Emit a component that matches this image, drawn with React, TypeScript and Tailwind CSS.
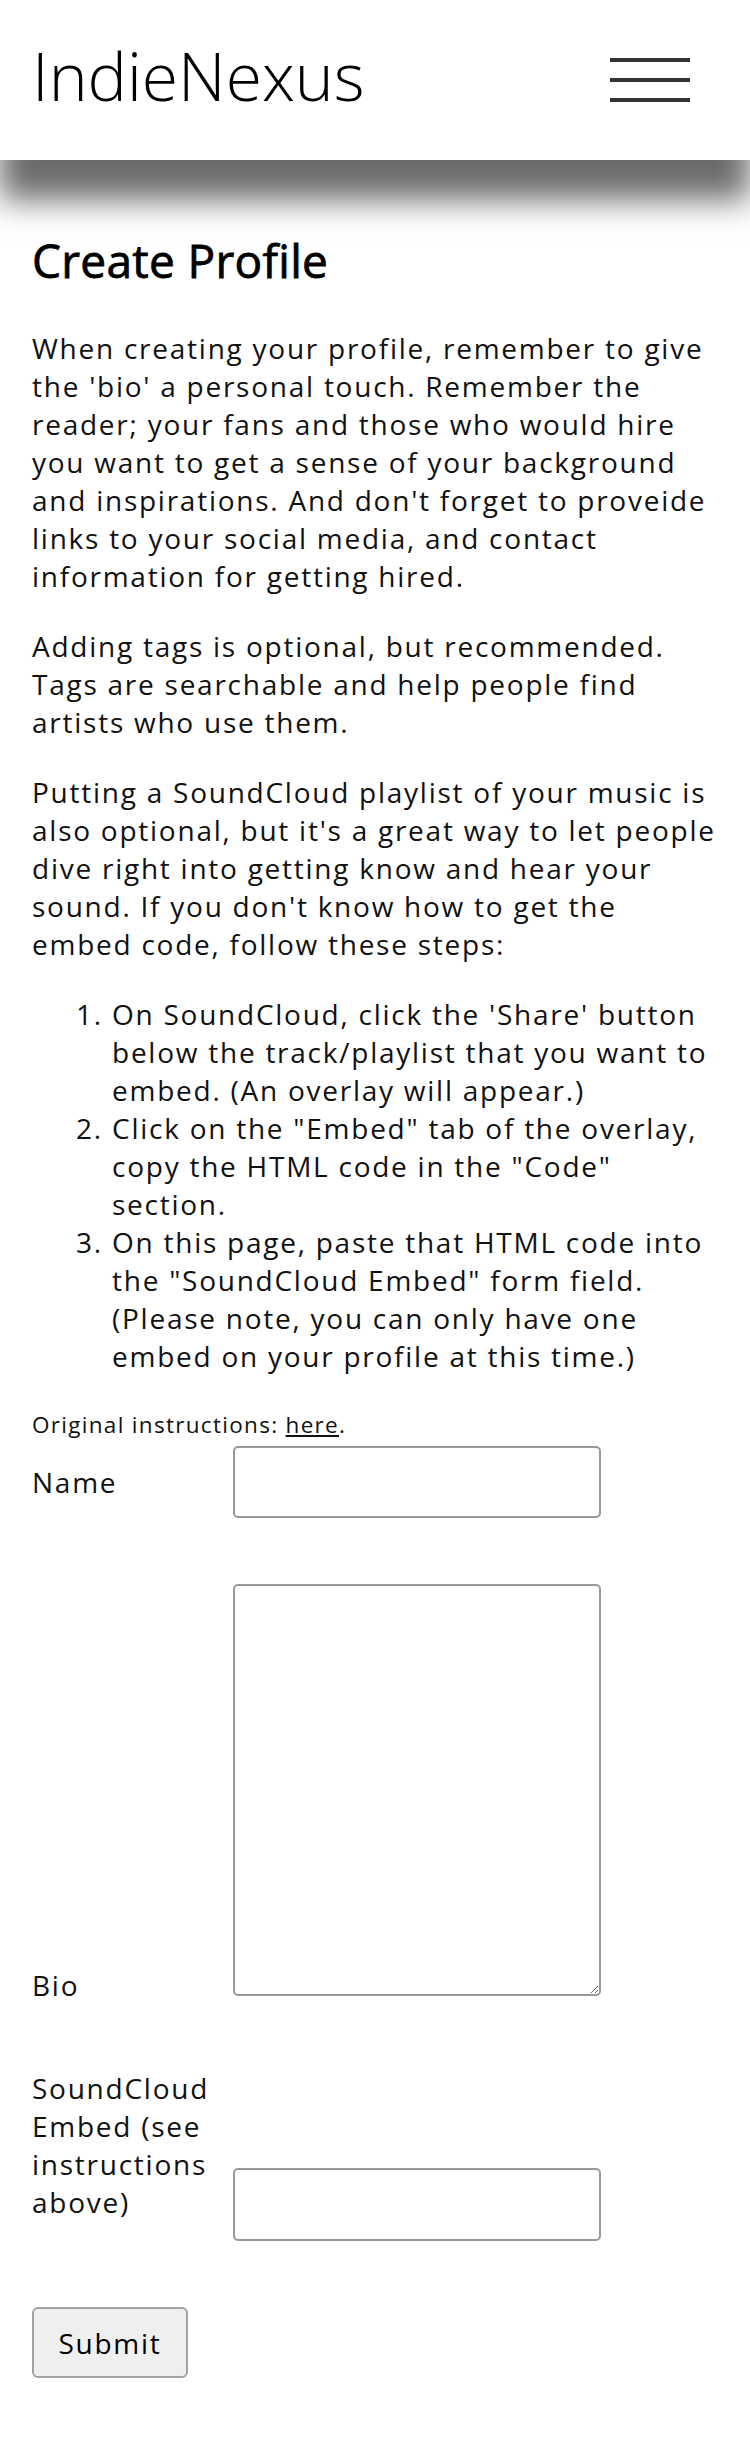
const body = 'text-[28px] leading-[38px] tracking-[1.75px]';

function Hamburger() {
  return (
    <button type="button" aria-label="Menu" className="flex flex-col gap-[16px]">
      <span className="block h-[4px] w-[80px] bg-[#333]" />
      <span className="block h-[4px] w-[80px] bg-[#333]" />
      <span className="block h-[4px] w-[80px] bg-[#333]" />
    </button>
  );
}

const field = 'block w-[368px] rounded-[5px] border-2 border-[#999] bg-white';

export default function App() {
  return (
    <div className="min-h-screen bg-white font-['Open_Sans',sans-serif] text-[#111]">
      <header className="flex h-[160px] items-center justify-between bg-white pl-8 pr-[60px] shadow-[0_40px_30px_rgba(0,0,0,0.58)]">
        <span className="mb-[10px] text-[66px] leading-none font-light text-black">IndieNexus</span>
        <Hamburger />
      </header>

      <main className="px-8 pb-[65px]">
        <h1 className="mt-[72px] mb-[41px] text-[46px] leading-[56px] font-normal tracking-[0.3px] text-black [-webkit-text-stroke:0.8px_black]">
          Create Profile
        </h1>

        <p className={body}>
          When creating your profile, remember to give the 'bio' a personal touch. Remember the reader;
          your fans and those who would hire you want to get a sense of your background and inspirations.
          And don't forget to proveide links to your social media, and contact information for getting
          hired.
        </p>

        <p className={`mt-8 ${body}`}>
          Adding tags is optional, but recommended. Tags are searchable and help people find artists who
          use them.
        </p>

        <p className={`mt-8 ${body}`}>
          Putting a SoundCloud playlist of your music is also optional, but it's a great way to let people
          dive right into getting know and hear your sound. If you don't know how to get the embed code,
          follow these steps:
        </p>

        <ol className={`mt-8 list-decimal pl-[80px] ${body}`}>
          <li>
            On SoundCloud, click the 'Share' button below the track/playlist that you want to embed. (An
            overlay will appear.)
          </li>
          <li>Click on the "Embed" tab of the overlay, copy the HTML code in the "Code" section.</li>
          <li>
            On this page, paste that HTML code into the "SoundCloud Embed" form field. (Please note, you
            can only have one embed on your profile at this time.)
          </li>
        </ol>

        <p className="mt-[35px] text-[22.5px] leading-[30px] tracking-[1.3px]">
          Original instructions:{' '}
          <a href="#" className="underline">
            here
          </a>
          .
        </p>

        <form className={body} onSubmit={(e) => e.preventDefault()}>
          <div className="mt-[6px] flex items-center">
            <label htmlFor="name" className="w-[201px] shrink-0">
              Name
            </label>
            <input id="name" type="text" className={`${field} h-[72px]`} />
          </div>

          <div className="mt-[66px] flex items-end">
            <label htmlFor="bio" className="-mb-[8px] w-[201px] shrink-0">
              Bio
            </label>
            <textarea id="bio" className={`${field} h-[412px]`} />
          </div>

          <div className="mt-[73px] flex items-end">
            <label htmlFor="embed" className="mb-[20px] w-[201px] shrink-0 pr-2">
              SoundCloud Embed (see instructions above)
            </label>
            <input id="embed" type="text" className={`${field} h-[73px]`} />
          </div>

          <button
            type="submit"
            className="mt-[66px] flex h-[71px] w-[156px] items-center justify-center rounded-[6px] border-2 border-[#a3a3a3] bg-[#efefef] text-black"
          >
            Submit
          </button>
        </form>
      </main>
    </div>
  );
}
